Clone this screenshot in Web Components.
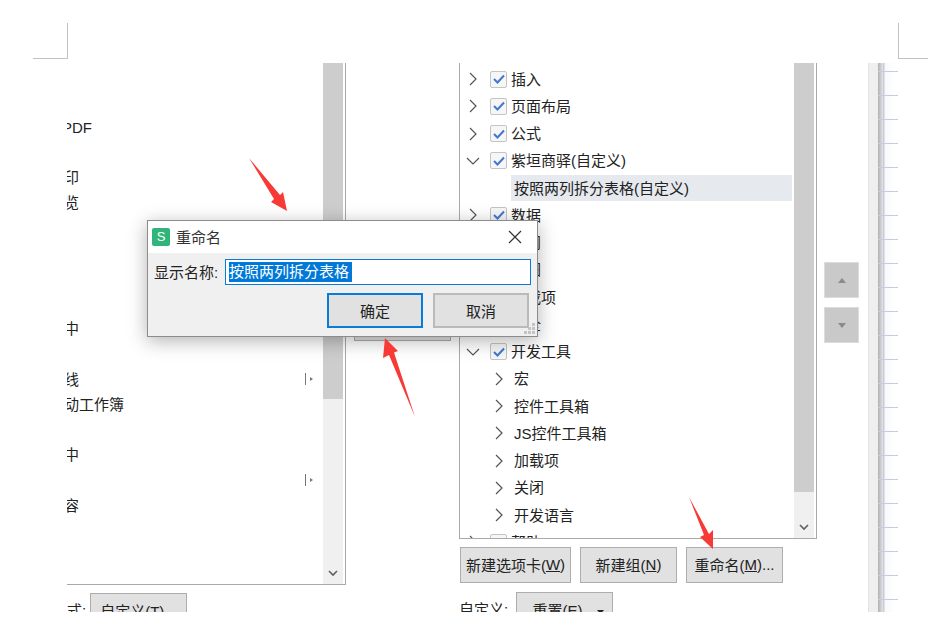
<!DOCTYPE html>
<html lang="zh">
<head>
<meta charset="utf-8">
<title>重命名</title>
<style>
html, body { margin: 0; background: #fff; }
body { font: 15px "Liberation Sans", "Noto Sans CJK SC", sans-serif; color: #222; overflow: hidden; }
</style>
</head>
<body>

<doc-canvas>
  <left-pane>
    <list-box thumb="336" slot-pad="51.6">
      <opt-row style="margin-left:-5px">PDF</opt-row>
      <opt-row></opt-row>
      <opt-row>印</opt-row>
      <opt-row>览</opt-row>
      <opt-row></opt-row>
      <opt-row></opt-row>
      <opt-row></opt-row>
      <opt-row></opt-row>
      <opt-row>中</opt-row>
      <opt-row></opt-row>
      <opt-row sub>线</opt-row>
      <opt-row>动工作簿</opt-row>
      <opt-row></opt-row>
      <opt-row>中</opt-row>
      <opt-row sub></opt-row>
      <opt-row>容</opt-row>
    </list-box>
    <foot-row>
      <span slot="label">式:</span>
      <gray-btn style="width:97px">自定义(T)...</gray-btn>
    </foot-row>
  </left-pane>

  <middle-pane></middle-pane>

  <right-pane>
    <list-box thumb="429" slot-pad="2.6">
      <tree-row chev="r" check>插入</tree-row>
      <tree-row chev="r" check>页面布局</tree-row>
      <tree-row chev="r" check>公式</tree-row>
      <tree-row chev="d" check>紫垣商驿(自定义)</tree-row>
      <tree-row child selected>按照两列拆分表格(自定义)</tree-row>
      <tree-row chev="r" check>数据</tree-row>
      <tree-row chev="r" check>审阅</tree-row>
      <tree-row chev="r" check>视图</tree-row>
      <tree-row chev="r" check>加载项</tree-row>
      <tree-row chev="r" check>安全</tree-row>
      <tree-row chev="d" check>开发工具</tree-row>
      <tree-row child chev="r">宏</tree-row>
      <tree-row child chev="r">控件工具箱</tree-row>
      <tree-row child chev="r">JS控件工具箱</tree-row>
      <tree-row child chev="r">加载项</tree-row>
      <tree-row child chev="r">关闭</tree-row>
      <tree-row child chev="r">开发语言</tree-row>
      <tree-row chev="r" check>帮助</tree-row>
    </list-box>
    <btn-row>
      <gray-btn style="width:111px">新建选项卡(<u>W</u>)</gray-btn>
      <gray-btn style="width:97px">新建组(<u>N</u>)</gray-btn>
      <gray-btn style="width:97px">重命名(<u>M</u>)...</gray-btn>
    </btn-row>
    <foot-row>
      <span slot="label">自定义:</span>
      <gray-btn style="width:97px" menu>重置(E)</gray-btn>
    </foot-row>
  </right-pane>

  <move-pane></move-pane>
  <sheet-strip></sheet-strip>
</doc-canvas>

<rename-dialog></rename-dialog>

<red-arrow points="249,158 280,195 283,192 287,211 271,202 274,199"></red-arrow>
<red-arrow points="385,338 398,351 394,352.5 415,417 389,355 383,358"></red-arrow>
<red-arrow points="689,497 709,534 713,530 713,549 700,537 704,535"></red-arrow>

<script>
// page with the two corner marks, panes go in the row under them
class DocCanvas extends HTMLElement {
  constructor() {
    super();
    this.attachShadow({ mode: "open" }).innerHTML = `
      <style>
        :host { display: block; width: 928px; height: 633px; }
        .marks { display: flex; justify-content: space-between; height: 36px; padding: 23px 0 4px 33px; }
        .mark { width: 35px; height: 36px; border-bottom: 1px solid #c2c2c2; border-right: 1px solid #c2c2c2; box-sizing: border-box; }
        .mark.r { width: 30px; border-right: 0; border-left: 1px solid #c2c2c2; margin-left: auto; }
        .row { display: flex; height: 549px; width: 831px; margin-left: 67px; overflow: hidden; }
      </style>
      <div class="marks"><div class="mark"></div><div class="mark r"></div></div>
      <div class="row"><slot></slot></div>`;
  }
}

class LeftPane extends HTMLElement {
  constructor() {
    super();
    this.attachShadow({ mode: "open" }).innerHTML = `
      <style>:host { display: flex; flex-direction: column; flex: none; width: 279px; --pane-h: 522px; --foot-pad: 8px; --label-w: 23px; }</style>
      <slot></slot>`;
  }
}

class RightPane extends HTMLElement {
  constructor() {
    super();
    this.attachShadow({ mode: "open" }).innerHTML = `
      <style>:host { display: flex; flex-direction: column; flex: none; width: 358px; --pane-h: 476px; --box-left: 1px solid #a9a9a9; }</style>
      <slot></slot>`;
  }
}

// the button lying behind the dialog, only its bottom edge shows
class MiddlePane extends HTMLElement {
  constructor() {
    super();
    this.attachShadow({ mode: "open" }).innerHTML = `
      <style>
        :host { display: block; flex: none; width: 113px; padding: 243px 0 0 8px; box-sizing: border-box; }
        div { width: 97px; height: 35px; box-sizing: border-box; background: #e1e1e1; border: 1px solid #adadad; }
      </style>
      <div></div>`;
  }
}

// list frame with the scrollbar on its right side
class ListBox extends HTMLElement {
  constructor() {
    super();
    var thumb = this.getAttribute("thumb");
    var pad = this.getAttribute("slot-pad");
    this.attachShadow({ mode: "open" }).innerHTML = `
      <style>
        :host { display: flex; flex: none; box-sizing: border-box; height: var(--pane-h); overflow: hidden;
          border-left: var(--box-left, 0); border-right: 1px solid #a9a9a9; border-bottom: 1px solid #a9a9a9; }
        .items { flex: 1; min-width: 0; padding-top: ${pad}px; }
        .bar { flex: none; width: 20px; margin-right: 2px; background: #f0f0f0; position: relative; }
        .thumb { height: ${thumb}px; background: #cdcdcd; }
        svg { position: absolute; left: 5px; bottom: 7px; }
      </style>
      <div class="items"><slot></slot></div>
      <div class="bar"><div class="thumb"></div>
        <svg width="10" height="7" viewBox="0 0 10 7"><path d="M1 1l4 4 4-4" fill="none" stroke="#606060" stroke-width="1.6"/></svg>
      </div>`;
  }
}

class OptRow extends HTMLElement {
  constructor() {
    super();
    var sub = this.hasAttribute("sub");
    this.attachShadow({ mode: "open" }).innerHTML = `
      <style>
        :host { display: flex; align-items: center; justify-content: space-between; height: 25.2px; margin-left: -3px;
          padding-right: 9px; white-space: nowrap; line-height: 25px; }
        svg { flex: none; }
      </style>
      <span><slot></slot></span>
      ${sub ? '<svg width="9" height="12" viewBox="0 0 9 12"><path d="M.5 0v12" stroke="#777"/><path d="M5 4l3 2-3 2z" fill="#777"/></svg>' : ""}`;
  }
}

class TreeRow extends HTMLElement {
  constructor() {
    super();
    var chev = this.getAttribute("chev");
    var child = this.hasAttribute("child");
    var check = this.hasAttribute("check");
    var selected = this.hasAttribute("selected");
    var icon = "";
    if (chev == "r") icon = '<svg width="8" height="14" viewBox="0 0 8 14"><path d="M1 1l6 6-6 6" fill="none" stroke="#555" stroke-width="1.2"/></svg>';
    if (chev == "d") icon = '<svg width="14" height="8" viewBox="0 0 14 8"><path d="M1 1l6 6 6-6" fill="none" stroke="#555" stroke-width="1.2"/></svg>';
    this.attachShadow({ mode: "open" }).innerHTML = `
      <style>
        :host { display: block; height: 27.25px; white-space: nowrap; }
        .line { display: flex; align-items: center; height: 100%; }
        .chev { flex: none; width: 14px; height: 14px; display: flex; align-items: center; justify-content: center; margin-left: ${child ? 32 : 6}px; }
        .box { flex: none; width: 17px; height: 17px; box-sizing: border-box; margin-left: 10px; border: 1.5px solid #c4c4c4; border-radius: 2px; background: #f6f6f6;
          display: flex; align-items: center; justify-content: center; }
        .text { margin-left: ${child ? 8 : 4}px; padding-top: 1px; line-height: 26px; }
        .sel { margin-left: 51px; flex: none; width: 281px; height: 26px; padding: 1px 0 0 3px; box-sizing: border-box; background: #e6e9ee; line-height: 25px; }
      </style>
      ${selected ? '<div class="line"><div class="sel"><slot></slot></div></div>' : `
      <div class="line">
        <div class="chev">${icon}</div>
        ${check ? '<div class="box"><svg width="12" height="10" viewBox="0 0 12 10"><path d="M1 5l3.5 3.5L11 1.5" fill="none" stroke="#3f78d2" stroke-width="2"/></svg></div>' : ""}
        <div class="text"><slot></slot></div>
      </div>`}`;
  }
}

class GrayBtn extends HTMLElement {
  constructor() {
    super();
    var menu = this.hasAttribute("menu");
    this.attachShadow({ mode: "open" }).innerHTML = `
      <style>
        :host { display: flex; flex: none; align-items: center; justify-content: center; position: relative; box-sizing: border-box; height: 36px;
          padding-bottom: 2px; background: #e1e1e1; border: 1px solid #adadad; white-space: nowrap; color: #222; }
        :host([menu]) { padding-right: 14px; }
        svg { position: absolute; right: 8px; top: 17px; }
      </style>
      <slot></slot>
      ${menu ? '<svg width="7" height="4" viewBox="0 0 7 4"><path d="M0 0h7L3.5 4z" fill="#222"/></svg>' : ""}`;
  }
}

class BtnRow extends HTMLElement {
  constructor() {
    super();
    this.attachShadow({ mode: "open" }).innerHTML = `
      <style>:host { display: flex; gap: 9px; padding: 8px 0 0 1px; }</style>
      <slot></slot>`;
  }
}

class FootRow extends HTMLElement {
  constructor() {
    super();
    this.attachShadow({ mode: "open" }).innerHTML = `
      <style>
        :host { display: flex; align-items: flex-start; padding-top: var(--foot-pad, 9px); }
        .label { width: var(--label-w, 57px); padding-top: 6px; line-height: 24px; white-space: nowrap; }
      </style>
      <div class="label"><slot name="label"></slot></div>
      <slot></slot>`;
  }
}

class MovePane extends HTMLElement {
  constructor() {
    super();
    this.attachShadow({ mode: "open" }).innerHTML = `
      <style>
        :host { display: flex; flex-direction: column; gap: 9px; flex: none; width: 51px; padding: 199px 0 0 7px; box-sizing: border-box; }
        div { width: 35px; height: 36px; background: #c9c9c9; border: 1px solid #dcdcdc; box-sizing: border-box; display: flex; align-items: center; justify-content: center; }
      </style>
      <div><svg width="8" height="5" viewBox="0 0 8 5"><path d="M0 5h8L4 0z" fill="#8a8a8a"/></svg></div>
      <div><svg width="8" height="5" viewBox="0 0 8 5"><path d="M0 0h8L4 5z" fill="#8a8a8a"/></svg></div>`;
  }
}

// grey edge of the window and the cut off rows of the sheet
class SheetStrip extends HTMLElement {
  constructor() {
    super();
    this.attachShadow({ mode: "open" }).innerHTML = `
      <style>
        :host { display: flex; flex: 1; min-width: 0; }
        .edge { flex: none; width: 9px; background: #efefef; border-left: 1px solid #e2e2e2; }
        .grid { flex: 1;
          background:
            repeating-linear-gradient(to bottom, transparent 0 8px, #c6cae4 8px 9px, transparent 9px 24px),
            linear-gradient(to right, #b0b0b0 0, #e4e4e4 5px, #c6cae4 5px, #c6cae4 6px, #f8f8f8 7px, #fff 16px); }
      </style>
      <div class="edge"></div><div class="grid"></div>`;
  }
}

class RenameDialog extends HTMLElement {
  constructor() {
    super();
    this.attachShadow({ mode: "open" }).innerHTML = `
      <style>
        :host { position: absolute; left: 147px; top: 220px; width: 391px; height: 117px; box-sizing: border-box;
          display: flex; flex-direction: column; background: #f0f0f0; border: 1px solid #8c8c8c; box-shadow: 0 4px 18px rgba(0,0,0,.3); color: #222; }
        .title { display: flex; align-items: center; flex: none; height: 32px; background: #fff; padding-left: 4px; color: #333; }
        .logo { width: 18px; height: 18px; border-radius: 2px; background: #2fb57a; color: #fff; font-size: 13px; line-height: 18px; text-align: center; margin-right: 6px; }
        .title span { flex: 1; margin-top: -2px; }
        .title svg { margin-right: 15px; }
        .field { display: flex; align-items: center; height: 26px; margin-top: 6px; padding-left: 6px; }
        .field label { width: 71px; white-space: nowrap; margin-top: -2px; }
        .input { flex: none; width: 306px; height: 26px; box-sizing: border-box; background: #fff; border: 1px solid #0a7bd6; padding-left: 3px; display: flex; align-items: center; }
        .input b { font-weight: normal; background: #0078d7; color: #fff; line-height: 20px; height: 20px; white-space: nowrap; padding-right: 3px; }
        .actions { display: flex; justify-content: flex-end; gap: 10px; margin-top: 8px; padding-right: 8px; }
        .actions div { width: 96px; height: 35px; box-sizing: border-box; background: #e1e1e1; border: 2px solid #bababa; display: flex; align-items: center; justify-content: center; }
        .actions .main { border-color: #0a7bd6; }
        .grip { position: absolute; right: 2px; bottom: 2px; }
      </style>
      <div class="title">
        <div class="logo">S</div><span>重命名</span>
        <svg width="14" height="14" viewBox="0 0 14 14"><path d="M1 1l12 12M13 1L1 13" stroke="#333" stroke-width="1.2"/></svg>
      </div>
      <div class="field"><label>显示名称:</label><div class="input"><b>按照两列拆分表格</b></div></div>
      <div class="actions"><div class="main">确定</div><div>取消</div></div>
      <svg class="grip" width="11" height="11" viewBox="0 0 11 11" fill="#c4c4c4">
        <rect x="8" y="0" width="3" height="3"/><rect x="4" y="4" width="3" height="3"/><rect x="8" y="4" width="3" height="3"/>
        <rect x="0" y="8" width="3" height="3"/><rect x="4" y="8" width="3" height="3"/><rect x="8" y="8" width="3" height="3"/>
      </svg>`;
  }
}

// annotation arrow, drawn in page coordinates over everything
class RedArrow extends HTMLElement {
  constructor() {
    super();
    this.attachShadow({ mode: "open" }).innerHTML = `
      <style>:host { position: absolute; left: 0; top: 0; width: 928px; height: 633px; pointer-events: none; }</style>
      <svg width="928" height="633" viewBox="0 0 928 633"><polygon points="${this.getAttribute("points")}" fill="#f83a36"/></svg>`;
  }
}

customElements.define("doc-canvas", DocCanvas);
customElements.define("left-pane", LeftPane);
customElements.define("right-pane", RightPane);
customElements.define("middle-pane", MiddlePane);
customElements.define("list-box", ListBox);
customElements.define("opt-row", OptRow);
customElements.define("tree-row", TreeRow);
customElements.define("gray-btn", GrayBtn);
customElements.define("btn-row", BtnRow);
customElements.define("foot-row", FootRow);
customElements.define("move-pane", MovePane);
customElements.define("sheet-strip", SheetStrip);
customElements.define("rename-dialog", RenameDialog);
customElements.define("red-arrow", RedArrow);
</script>
</body>
</html>
